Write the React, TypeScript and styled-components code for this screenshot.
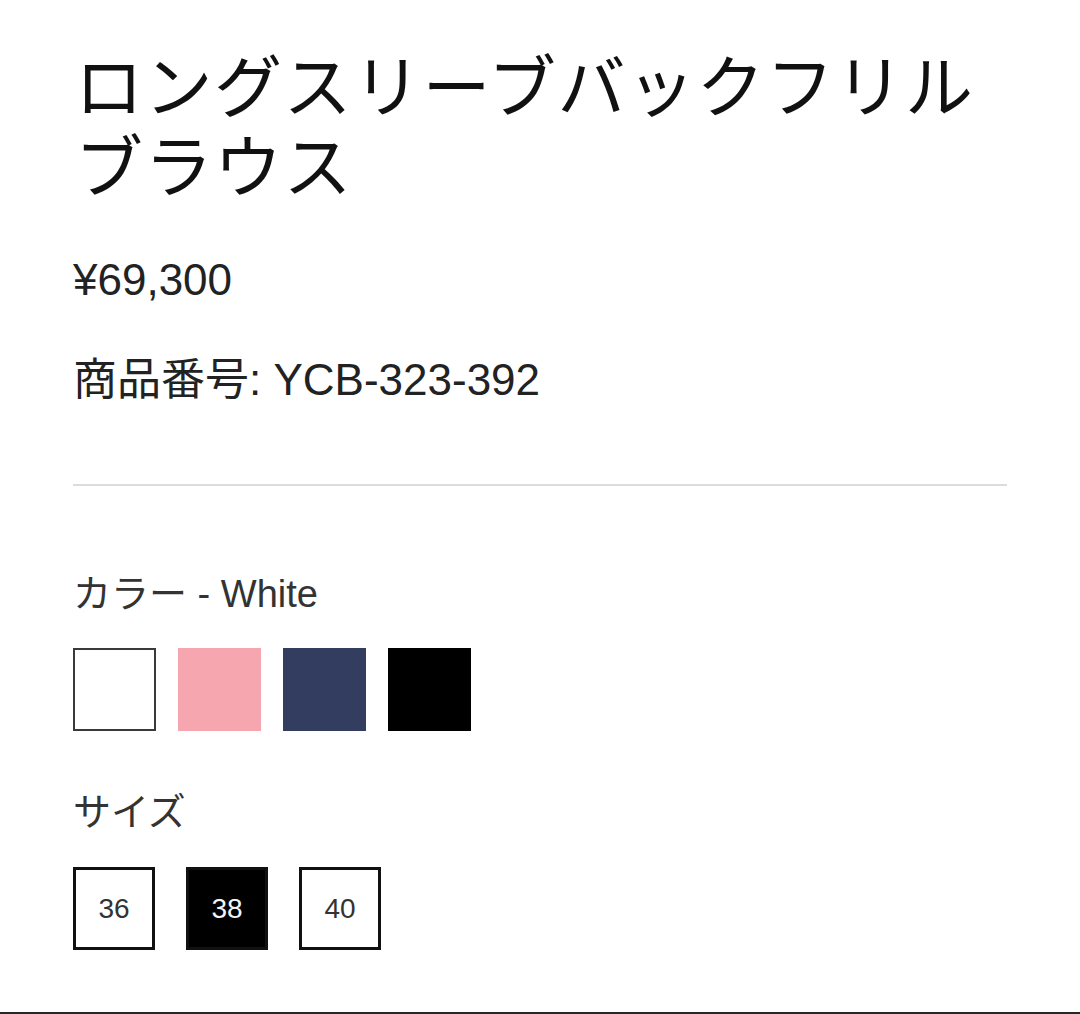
import React, { useState } from 'react';
import styled, { createGlobalStyle } from 'styled-components';

const GlobalStyle = createGlobalStyle`
  html, body {
    margin: 0;
    padding: 0;
    background: #fff;
  }
  body {
    font-family: 'Liberation Sans', 'Noto Sans CJK JP', sans-serif;
    -webkit-font-smoothing: antialiased;
  }
`;

type Swatch = { name: string; color: string };

const colors: Array<Swatch> = [
  { name: 'White', color: '#ffffff' },
  { name: 'Pink', color: '#f5a6ae' },
  { name: 'Navy', color: '#323d5f' },
  { name: 'Black', color: '#000000' },
];
const sizes: Array<string> = ['36', '38', '40'];

const App = () => {
  const [color] = useState<string>('White');
  const [size, setSize] = useState<string>('38');

  return (
    <Page>
      <GlobalStyle />
      <Title>ロングスリーブバックフリルブラウス</Title>
      <Price>¥69,300</Price>
      <Code>商品番号: YCB-323-392</Code>
      <Divider />
      <Label>カラー - {color}</Label>
      <SwatchRow>
        {colors.map((c) => (
          <SwatchBox key={c.name} $bg={c.color} $outlined={c.name === 'White'} />
        ))}
      </SwatchRow>
      <Label $gap={59}>サイズ</Label>
      <SizeRow>
        {sizes.map((s) => (
          <SizeBox key={s} $active={s === size} onClick={() => setSize(s)}>
            {s}
          </SizeBox>
        ))}
      </SizeRow>
    </Page>
  );
};

const Page = styled.main`
  box-sizing: border-box;
  width: 1080px;
  height: 1014px;
  padding: 43px 73px 0 73px;
  border-bottom: 2px solid #262626;
  display: flex;
  flex-direction: column;
  overflow: hidden;
`;
const Title = styled.h1`
  margin: 0;
  padding-left: 2px;
  font-family: 'Noto Sans CJK JP', sans-serif;
  font-weight: 400;
  font-size: 68px;
  line-height: 80px;
  letter-spacing: 1.5px;
  color: #111;
  width: 934px;
`;
const Price = styled.div`
  margin-top: 52px;
  font-size: 44px;
  line-height: 50px;
  color: #222;
`;
const Code = styled.div`
  margin-top: 50px;
  font-size: 44px;
  line-height: 50px;
  color: #222;
`;
const Divider = styled.hr`
  margin: 79px 0 0 0;
  width: 934px;
  height: 2px;
  border: none;
  background: #dcdcdc;
`;
const Label = styled.div<{ $gap?: number }>`
  margin-top: ${(p) => p.$gap ?? 86}px;
  font-size: 38px;
  line-height: 44px;
  color: #333;
`;
const SwatchRow = styled.div`
  margin-top: 32px;
  display: flex;
  gap: 22px;
`;
const SwatchBox = styled.div<{ $bg: string; $outlined: boolean }>`
  box-sizing: border-box;
  width: 83px;
  height: 83px;
  background: ${(p) => p.$bg};
  border: ${(p) => (p.$outlined ? '2px solid #3a3a3a' : 'none')};
`;
const SizeRow = styled.div`
  margin-top: 33px;
  display: flex;
  gap: 31px;
`;
const SizeBox = styled.div<{ $active: boolean }>`
  box-sizing: border-box;
  width: 82px;
  height: 83px;
  display: flex;
  align-items: center;
  justify-content: center;
  border: 3px solid #111;
  background: ${(p) => (p.$active ? '#000' : '#fff')};
  color: ${(p) => (p.$active ? '#f4f4f4' : '#333')};
  font-size: 28px;
  cursor: pointer;
`;

export default App;
